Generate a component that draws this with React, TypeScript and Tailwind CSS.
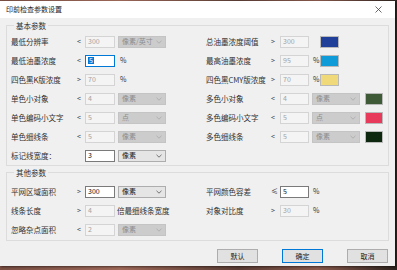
import type { ReactNode } from "react";

const FONT = "font-['Microsoft_YaHei','Noto_Sans_CJK_SC',sans-serif]";

// ── small controls ────────────────────────────────────────────────────────────

function Chevron({ dim }: { dim?: boolean }) {
  return (
    <svg width="6" height="4" viewBox="0 0 6 4" className="shrink-0">
      <polyline
        points="0.5,0.8 3,3.2 5.5,0.8"
        fill="none"
        stroke={dim ? "#a8a8a8" : "#555"}
        strokeWidth="0.8"
      />
    </svg>
  );
}

function Field({
  value,
  state = "disabled",
  w = "w-[30px]",
}: {
  value: string;
  state?: "disabled" | "enabled" | "focused";
  w?: string;
}) {
  const look =
    state === "disabled"
      ? "bg-[#f4f4f4] border-[#d4d4d4] text-[#a3a3a3]"
      : state === "focused"
        ? "bg-white border-[#0078d7] text-[#111]"
        : "bg-white border-[#7a7a7a] text-[#111]";
  return (
    <div
      className={`${w} h-[12px] border ${look} flex items-center pl-[2px] text-[7px] leading-none shrink-0`}
    >
      {state === "focused" ? (
        <span className="bg-[#0078d7] text-white px-px">{value}</span>
      ) : (
        value
      )}
    </div>
  );
}

function Select({ value, enabled }: { value: string; enabled?: boolean }) {
  return (
    <div
      className={`w-[48px] h-[12px] border flex items-center justify-between pl-[3px] pr-[3px] text-[7px] leading-none shrink-0 ${
        enabled
          ? "bg-[#e5e5e5] border-[#adadad] text-[#222]"
          : "bg-[#cccccc] border-[#c4c4c4] text-[#8c8c8c]"
      }`}
    >
      <span>{value}</span>
      <Chevron dim={!enabled} />
    </div>
  );
}

function Swatch({ color, ml, w = "w-[18px]" }: { color: string; ml: string; w?: string }) {
  return (
    <div
      className={`${ml} ${w} h-[12px] border border-[#b9b9b9] shrink-0`}
      style={{ backgroundColor: color }}
    />
  );
}

// ── row halves ────────────────────────────────────────────────────────────────

function Left({
  label,
  sign,
  children,
  tail,
}: {
  label: string;
  sign?: string;
  children: ReactNode;
  tail?: ReactNode;
}) {
  return (
    <div className="w-[195px] flex items-center shrink-0">
      <div className="w-[66px] text-[7.5px] leading-none text-[#303030] whitespace-nowrap">
        {label}
      </div>
      <div className="w-[8px] text-[7px] leading-none text-[#444]">{sign}</div>
      {children}
      <div className="w-[51px] flex items-center shrink-0">{tail}</div>
    </div>
  );
}

function Right({
  label,
  sign,
  children,
}: {
  label: string;
  sign: string;
  children: ReactNode;
}) {
  return (
    <div className="flex items-center">
      <div className="w-[65px] text-[7.5px] leading-none text-[#303030] whitespace-nowrap">
        {label}
      </div>
      <div className="w-[9px] text-[7px] leading-none text-[#444]">{sign}</div>
      {children}
    </div>
  );
}

function Pct({ w, pl }: { w: string; pl: string }) {
  return (
    <div className={`${w} ${pl} text-[7px] leading-none text-[#333] shrink-0`}>
      %
    </div>
  );
}

function Row({ children }: { children: ReactNode }) {
  return <div className="h-[19px] flex items-center">{children}</div>;
}

function Group({
  title,
  className,
  children,
}: {
  title: string;
  className: string;
  children: ReactNode;
}) {
  return (
    <fieldset className={`border border-[#dcdcdc] pl-[4px] ${className}`}>
      <legend className="ml-[3px] px-[2px] text-[7.5px] leading-[9px] text-[#303030]">
        {title}
      </legend>
      {children}
    </fieldset>
  );
}

function Button({ label, primary }: { label: string; primary?: boolean }) {
  return (
    <button
      className={`w-[41px] h-[14px] bg-[#e1e1e1] border text-[7px] leading-none text-[#222] ${
        primary ? "border-[#0078d7]" : "border-[#adadad]"
      }`}
    >
      {label}
    </button>
  );
}

// ── dialog ────────────────────────────────────────────────────────────────────

export default function App() {
  return (
    <div
      className={`w-[397px] h-[270px] pt-px overflow-hidden bg-[linear-gradient(90deg,#7a4f44,#a06a5a_30%,#5b3d35_60%,#8a5a4c_80%,#2e2420)] ${FONT}`}
    >
      <div className="w-[395px] h-[265px] bg-[#f0f0f0] flex flex-col shadow-[1px_1px_2px_rgba(0,0,0,0.5)]">
        {/* Title bar */}
        <div className="h-[17px] bg-white flex items-center justify-between pl-[6px] pr-[13px] shrink-0">
          <span className="text-[7px] leading-none text-[#222]">印前检查参数设置</span>
          <svg width="7" height="7" viewBox="0 0 7 7">
            <path d="M0.5 0.5 L6.5 6.5 M6.5 0.5 L0.5 6.5" stroke="#444" strokeWidth="0.8" />
          </svg>
        </div>

        <div className="px-[6px] pt-[3px]">
          <Group title="基本参数" className="h-[145px] pt-[2px]">
            <Row>
              <Left label="最低分辨率" sign="<" tail={<div className="ml-[3px]"><Select value="像素/英寸" /></div>}>
                <Field value="300" />
              </Left>
              <Right label="总油墨浓度阈值" sign=">">
                <Field value="300" w="w-[29px]" />
                <Swatch color="#1f3f98" ml="ml-[11px]" w="w-[19px]" />
              </Right>
            </Row>
            <Row>
              <Left label="最低油墨浓度" sign="<" tail={<Pct w="w-[51px]" pl="pl-[5px]" />}>
                <Field value="5" state="focused" />
              </Left>
              <Right label="最高油墨浓度" sign=">">
                <Field value="95" w="w-[29px]" />
                <Pct w="w-[11px]" pl="pl-[4px]" />
                <Swatch color="#0f9ad8" ml="ml-0" w="w-[19px]" />
              </Right>
            </Row>
            <Row>
              <Left label="四色黑K版浓度" sign=">" tail={<Pct w="w-[51px]" pl="pl-[5px]" />}>
                <Field value="70" />
              </Left>
              <Right label="四色黑CMY版浓度" sign=">">
                <Field value="70" w="w-[29px]" />
                <Pct w="w-[11px]" pl="pl-[4px]" />
                <Swatch color="#f0d978" ml="ml-0" w="w-[19px]" />
              </Right>
            </Row>
            <Row>
              <Left label="单色小对象" sign="<" tail={<div className="ml-[3px]"><Select value="像素" /></div>}>
                <Field value="4" />
              </Left>
              <Right label="多色小对象" sign="<">
                <Field value="4" w="w-[29px]" />
                <div className="ml-[3px]"><Select value="像素" /></div>
                <Swatch color="#3e5a37" ml="ml-[5px]" />
              </Right>
            </Row>
            <Row>
              <Left label="单色编码小文字" sign="<" tail={<div className="ml-[3px]"><Select value="点" /></div>}>
                <Field value="5" />
              </Left>
              <Right label="多色编码小文字" sign="<">
                <Field value="5" w="w-[29px]" />
                <div className="ml-[3px]"><Select value="点" /></div>
                <Swatch color="#e83a5b" ml="ml-[5px]" />
              </Right>
            </Row>
            <Row>
              <Left label="单色细线条" sign="<" tail={<div className="ml-[3px]"><Select value="像素" /></div>}>
                <Field value="5" />
              </Left>
              <Right label="多色细线条" sign="<">
                <Field value="5" w="w-[29px]" />
                <div className="ml-[3px]"><Select value="像素" /></div>
                <Swatch color="#0e2810" ml="ml-[5px]" />
              </Right>
            </Row>
            <Row>
              <div className="w-[195px] flex items-center shrink-0">
                <div className="w-[74px] text-[7.5px] leading-none text-[#303030]">标记线宽度：</div>
                <Field value="3" state="enabled" />
                <div className="ml-[3px]"><Select value="像素" enabled /></div>
              </div>
            </Row>
          </Group>

          <Group title="其他参数" className="mt-[2px] h-[73px] pt-[5px]">
            <Row>
              <Left label="平网区域面积" sign=">" tail={<div className="ml-[3px]"><Select value="像素" enabled /></div>}>
                <Field value="300" state="enabled" />
              </Left>
              <Right label="平网颜色容差" sign="≤">
                <Field value="5" state="enabled" w="w-[29px]" />
                <Pct w="w-[11px]" pl="pl-[4px]" />
              </Right>
            </Row>
            <Row>
              <Left
                label="线条长度"
                sign=">"
                tail={<span className="pl-[2px] text-[7.5px] leading-none text-[#303030] whitespace-nowrap">倍最细线条宽度</span>}
              >
                <Field value="4" />
              </Left>
              <Right label="对象对比度" sign=">">
                <Field value="30" w="w-[29px]" />
                <Pct w="w-[11px]" pl="pl-[4px]" />
              </Right>
            </Row>
            <Row>
              <Left label="忽略杂点面积" sign="<" tail={<div className="ml-[3px]"><Select value="像素" /></div>}>
                <Field value="2" />
              </Left>
            </Row>
          </Group>

          <div className="flex justify-end gap-[24px] mt-[8px] pr-px">
            <Button label="默认" />
            <Button label="确定" primary />
            <Button label="取消" />
          </div>
        </div>
      </div>
    </div>
  );
}
